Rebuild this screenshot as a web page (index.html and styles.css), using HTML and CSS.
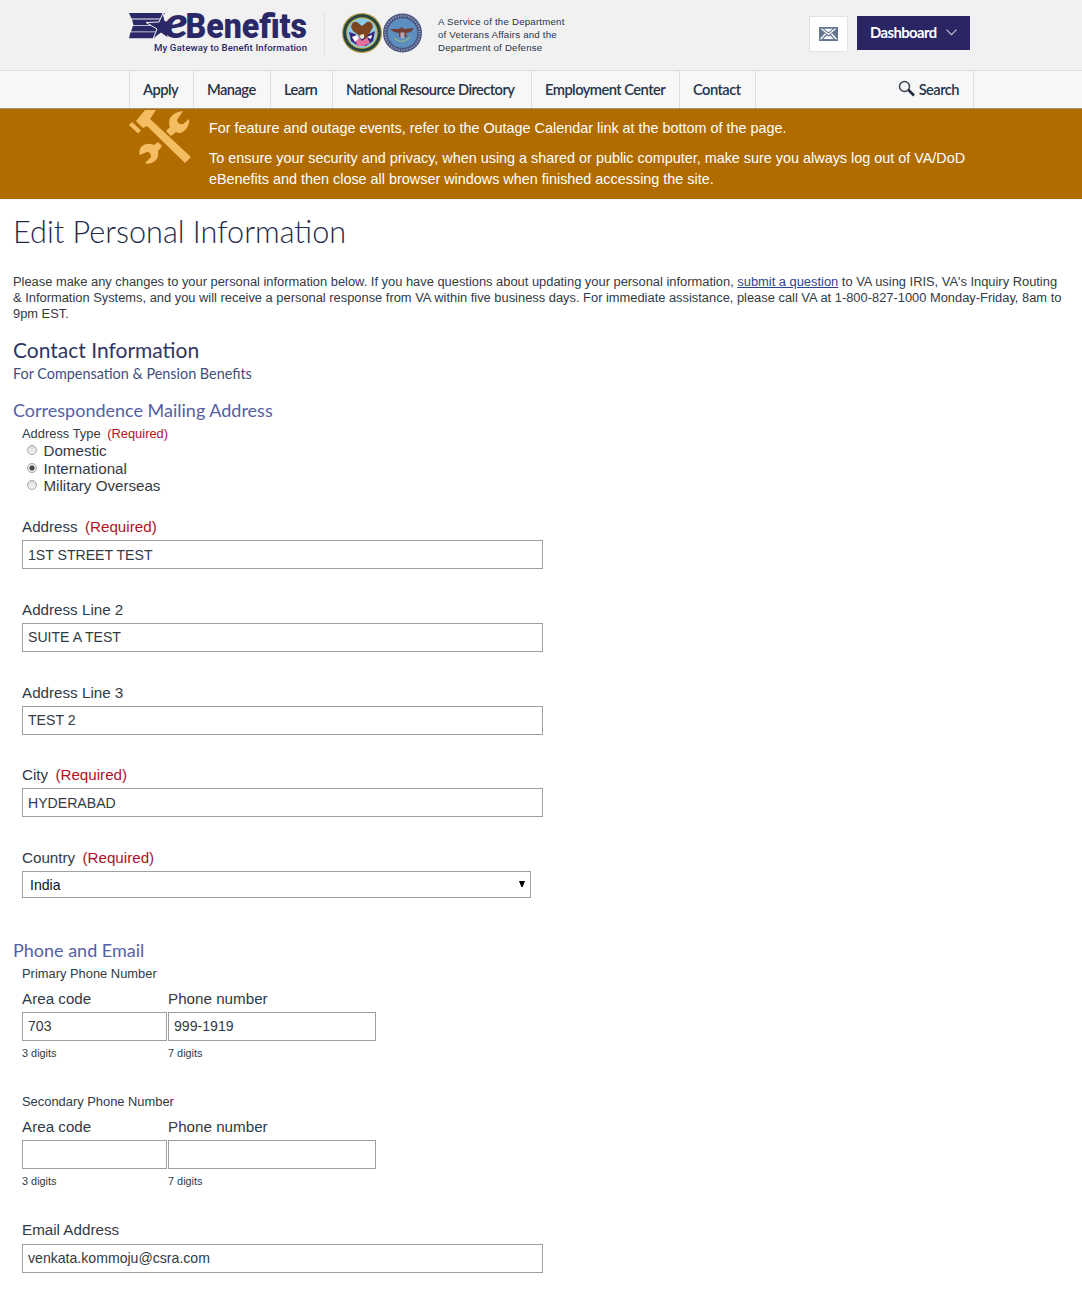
FILE: index.html
```html
<!DOCTYPE html>
<html lang="en">
<head>
<meta charset="utf-8">
<title>Edit Personal Information - eBenefits</title>
<link rel="stylesheet" href="styles.css">
</head>
<body>
<header class="header">
  <div class="wrap header-inner">
    <svg class="logo" width="181" height="42" viewBox="0 0 181 42" role="img" aria-label="eBenefits">
      <g fill="#2b2868">
        <path d="M0 0H36L33 5.600H2.500z"/>
        <path d="M3 6.400H33L31 12H4.500z"/>
        <path d="M4 12.800H30L28 18.400H2z"/>
        <path d="M1.500 19.200H28L26 25.200H0z"/>
        <path d="M34 0 36 8 44 7 38 14 39 25 32 20 24 26 28 16 17 9.500 30 9z" stroke="#f1f1f1" stroke-width="1"/>
      </g>
      <text class="logo-e" x="35" y="25.300" textLength="24" lengthAdjust="spacingAndGlyphs">e</text>
      <text class="logo-name" x="56.500" y="25.300" textLength="121.500" lengthAdjust="spacingAndGlyphs">Benefits</text>
      <text class="logo-tag" x="25" y="37.500" textLength="153" lengthAdjust="spacing">My Gateway to Benefit Information</text>
    </svg>
    <div class="service">
      <svg class="seals" width="81" height="42" viewBox="0 0 81 42" aria-hidden="true">
        <circle cx="20" cy="21" r="20" fill="#b09b4a"/>
        <circle cx="20" cy="21" r="18.800" fill="#1c3b3c"/>
        <circle cx="20" cy="21" r="17" fill="none" stroke="#45655a" stroke-width="1.200" stroke-dasharray="1 1.500"/>
        <circle cx="20" cy="21" r="15.800" fill="#c9ab3a"/>
        <circle cx="20" cy="21" r="14.800" fill="#8ccbe8"/>
        <path d="M7 20 13 22 20 27 27 22 33 19 31 29 24 34H16L9 29z" fill="#3a2678"/>
        <path d="M13 27 17 25 20 29 25 25 28 31 22 34H15z" fill="#e56f9b"/>
        <path d="M10 25 15 23 17 26 13 30zM25 25 30 23 29 27z" fill="#fff"/>
        <path d="M9 15Q10 9 15 10L20 14 25 10Q30 9 31 15L27 22 23 27 18 24 11 19z" fill="#7a451f"/>
        <path d="M18 23 22 22 22 26 19 27z" fill="#f3e8d0"/>
        <circle cx="60.500" cy="21" r="19.500" fill="#4a5580"/>
        <circle cx="60.500" cy="21" r="17.200" fill="none" stroke="#959db8" stroke-width="2" stroke-dasharray="1.200 1.500"/>
        <circle cx="60.500" cy="21" r="14.800" fill="#5c8fc0"/>
        <path d="M48 17 57 17 60 15 62 17 72 16 69 20 64 21 65 25 57 25 57 21 52 20z" fill="#713f35"/>
        <path d="M58.500 20.500H62.500V24.500L60.500 27 58.500 24.500z" fill="#b9a9b4"/>
        <path d="M52 26Q60 33 68 25" fill="none" stroke="#8fb283" stroke-width="1.200"/>
      </svg>
      <p class="service-text">A Service of the Department<br>of Veterans Affairs and the<br>Department of Defense</p>
    </div>
    <div class="actions">
      <a class="mail" aria-label="Messages">
        <svg width="19" height="14" viewBox="0 0 19 14"><rect width="19" height="14" fill="#64758f"/><path d="M2.500 1.800 9.500 7.500 16.500 1.800M1.500 12.200 6.500 6.800M17.500 12.200 12.500 6.800" fill="none" stroke="#fff" stroke-width="1.300"/><path d="M4.200 12 7.800 8.600 9.500 9.800 11.200 8.600 14.800 12z" fill="#fff"/><path d="M5 1.800H14L9.500 5.300z" fill="#fff"/></svg>
      </a>
      <a class="dashboard"><span class="dashboard-text">Dashboard</span>
        <svg width="11" height="7" viewBox="0 0 11 7"><path d="M.5.700 5.500 5.700 10.500.700" fill="none" stroke="#c5c4da" stroke-width="1.100"/></svg>
      </a>
    </div>
  </div>
</header>
<nav class="nav">
  <div class="wrap nav-inner">
    <a class="nav-item nav-apply">Apply</a>
    <a class="nav-item nav-manage">Manage</a>
    <a class="nav-item nav-learn">Learn</a>
    <a class="nav-item nav-directory">National Resource Directory</a>
    <a class="nav-item nav-employment">Employment Center</a>
    <a class="nav-item nav-contact">Contact</a>
    <a class="nav-search"><svg width="18" height="18" viewBox="0 0 18 18"><circle cx="6.500" cy="6.500" r="5" fill="none" stroke="#3a4352" stroke-width="1.500"/><path d="M10.500 10 16 15.500" stroke="#222c3c" stroke-width="2.600"/></svg><span>Search</span></a>
  </div>
</nav>
<section class="alert">
  <div class="wrap alert-inner">
    <svg class="tools" width="64" height="56" viewBox="0 0 64 56" aria-hidden="true">
      <g fill="#f4bd61">
        <path d="M16 0H27L21 9 62 47 56 53 18 16 14 18 7 11z"/>
        <path d="M3 12 12 20.500 9 23.500 0 15z"/>
        <path d="M54 1Q45 2 41 8Q39 13 41 17L37 21 42 26 47 22Q52 25 57 19Q61 14 60 9L54 14Q49 15 48 10z"/>
        <path d="M29 32 33 36 29 41Q30 48 26 51Q21 55 16 53L22 47Q22 42 18 42L11 45Q9 40 13 36Q19 32 25 35z"/>
      </g>
    </svg>
    <div class="alert-text">
      <p>For feature and outage events, refer to the Outage Calendar link at the bottom of the page.</p>
      <p>To ensure your security and privacy, when using a shared or public computer, make sure you always log out of VA/DoD<br>eBenefits and then close all browser windows when finished accessing the site.</p>
    </div>
  </div>
</section>
<main class="main">
  <h1 class="title">Edit Personal Information</h1>
  <p class="intro">Please make any changes to your personal information below. If you have questions about updating your personal information, <a class="link" href="#">submit a question</a> to VA using IRIS, VA's Inquiry Routing<br>&amp; Information Systems, and you will receive a personal response from VA within five business days. For immediate assistance, please call VA at 1-800-827-1000 Monday-Friday, 8am to<br>9pm EST.</p>
  <h2 class="section-title">Contact Information</h2>
  <p class="section-sub">For Compensation &amp; Pension Benefits</p>
  <form>
    <h3 class="group-title">Correspondence Mailing Address</h3>
    <div class="group">
      <div class="legend">Address Type <span class="required">(Required)</span></div>
      <div class="radios">
        <label class="radio"><i class="dot"></i>Domestic</label>
        <label class="radio"><i class="dot dot-on"></i>International</label>
        <label class="radio"><i class="dot"></i>Military Overseas</label>
      </div>
      <div class="field"><label class="label">Address <span class="required">(Required)</span></label><input class="input" value="1ST STREET TEST"></div>
      <div class="field"><label class="label">Address Line 2</label><input class="input" value="SUITE A TEST"></div>
      <div class="field"><label class="label">Address Line 3</label><input class="input" value="TEST 2"></div>
      <div class="field"><label class="label">City <span class="required">(Required)</span></label><input class="input" value="HYDERABAD"></div>
      <div class="field"><label class="label">Country <span class="required">(Required)</span></label>
        <div class="select"><span>India</span><svg width="6" height="6" viewBox="0 0 6 6"><path d="M0 0H6L3.600 6H2.400z"/></svg></div>
      </div>
    </div>
    <h3 class="group-title phone-title">Phone and Email</h3>
    <div class="group">
      <div class="legend">Primary Phone Number</div>
      <div class="phones">
        <div class="area"><label class="label">Area code</label><input class="input" value="703"><span class="hint">3 digits</span></div>
        <div class="number"><label class="label">Phone number</label><input class="input" value="999-1919"><span class="hint">7 digits</span></div>
      </div>
      <div class="legend">Secondary Phone Number</div>
      <div class="phones">
        <div class="area"><label class="label">Area code</label><input class="input" value=""><span class="hint">3 digits</span></div>
        <div class="number"><label class="label">Phone number</label><input class="input" value=""><span class="hint">7 digits</span></div>
      </div>
      <div class="email"><label class="label">Email Address</label><input class="input" value="venkata.kommoju@csra.com"></div>
    </div>
  </form>
</main>
</body>
</html>
```
FILE: styles.css
```css
* { box-sizing: border-box; }
html { background: #fff; }
body { margin: 0; height: 1301px; overflow: hidden; font-family: "Liberation Sans", Arial, sans-serif; color: #323a45; background: #fff; }
h1, h2, h3, p { margin: 0; font-weight: 400; }
.wrap { width: 845px; margin-left: 129px; }

.header { height: 71px; background: #f1f1f1; border-bottom: 1px solid #ddd; }
.header-inner { display: flex; align-items: flex-start; }
.logo { margin-top: 13px; flex: none; overflow: visible; }
.logo text { fill: #2b2868; }
.logo-e { font: italic 900 43px Lato, sans-serif; }
.logo-name { font: 900 34.500px Roboto, sans-serif; }
.logo-tag { font: 500 9.600px Roboto, sans-serif; }
.service { display: flex; margin: 12px 0 0 14px; padding-left: 17px; border-left: 1px solid #e1e1e1; height: 42px; }
.service-text { margin: 3px 0 0 15px; font-size: 9.7px; line-height: 13px; letter-spacing: .2px; color: #26344a; white-space: nowrap; }
.actions { display: flex; margin: 16px 4px 0 auto; gap: 9px; }
.mail { display: flex; width: 39px; height: 36px; align-items: center; justify-content: center; background: #fff; border: 1px solid #e2e2e2; }
.dashboard { display: flex; width: 113px; height: 34px; align-items: center; gap: 9px; padding: 0 0 2px 13px; background: #292663; color: #fff; font: 700 14.800px Lato, sans-serif; letter-spacing: -.55px; }

.nav { height: 37px; background: #f7f7f7; }
.nav-inner { display: flex; height: 37px; border-left: 1px solid #ddd; border-right: 1px solid #ddd; color: #25344a; font: 600 14.700px Lato, sans-serif; letter-spacing: -.55px; }
.nav-item { display: flex; align-items: center; padding: 0 0 1px 13px; border-right: 1px solid #ddd; white-space: nowrap; }
.nav-apply { width: 64px; }
.nav-manage { width: 77px; }
.nav-learn { width: 62px; }
.nav-directory { width: 199px; }
.nav-employment { width: 148px; }
.nav-contact { width: 76px; }
.nav-search { display: flex; align-items: center; gap: 3px; margin: 0 14px 0 auto; padding-bottom: 1px; }

.alert { height: 91px; background: #b16c00; border-top: 1px solid #a29070; }
.alert-inner { display: flex; }
.tools { margin-top: 1px; flex: none; }
.alert-text { margin: 9px 0 0 16px; font-size: 14.4px; line-height: 21px; color: #fff; white-space: nowrap; }
.alert-text p + p { margin-top: 9px; }

.main { padding: 0 13px; }
.title { height: 66px; font: 300 30.650px/66px Lato, sans-serif; color: #262a4a; }
.intro { margin-top: 9px; font-size: 12.880px; line-height: 16px; white-space: nowrap; }
.link { color: #2b4590; }
.section-title { margin-top: 14px; font: 400 21px/28px Lato, sans-serif; color: #2e3763; }
.section-sub { margin-top: 1px; font: 400 14.4px/18px Lato, sans-serif; color: #41507c; }
.group-title { margin-top: 16px; font: 400 18px/22px Lato, sans-serif; color: #5560a5; }
.group { padding: 4px 0 0 9px; }
.legend { height: 17px; font-size: 12.900px; line-height: 17px; }
.required { margin-left: 3px; color: #ae1226; }
.radios { height: 76px; font-size: 15.150px; }
.radio { display: flex; align-items: center; height: 17.600px; padding-left: 5px; }
.dot { width: 10px; height: 10px; margin: -1px 6.500px 0 0; border: 1px solid #a5a5a5; border-radius: 50%; background: linear-gradient(#dcdcdc, #f4f4f4); }
.dot-on { background: radial-gradient(circle, #4a4a4a 0 2.200px, #eee 3px); }
.field { height: 82.800px; }
.label { display: block; height: 22px; font-size: 15.200px; line-height: 18px; }
.input { display: block; width: 521px; height: 29px; padding: 1px 5px; border: 1px solid #9f9f9f; border-radius: 0; background: #fff; font: 14.100px "Liberation Sans", Arial, sans-serif; color: #323a45; outline: 0; }
.select { display: flex; width: 509px; height: 27px; align-items: center; justify-content: space-between; padding: 1px 5px 0 7px; border: 1px solid #9f9f9f; font-size: 14.100px; color: #111; }
.select svg { margin-bottom: 3px; }
.phone-title { margin-top: 7px; }
.phones { display: flex; gap: 1px; height: 111px; padding-top: 8px; }
.area .input { width: 145px; }
.number .input { width: 208px; }
.hint { display: block; margin-top: 5.500px; font-size: 10.900px; line-height: 14px; }
.email .label { height: 23px; }
```
